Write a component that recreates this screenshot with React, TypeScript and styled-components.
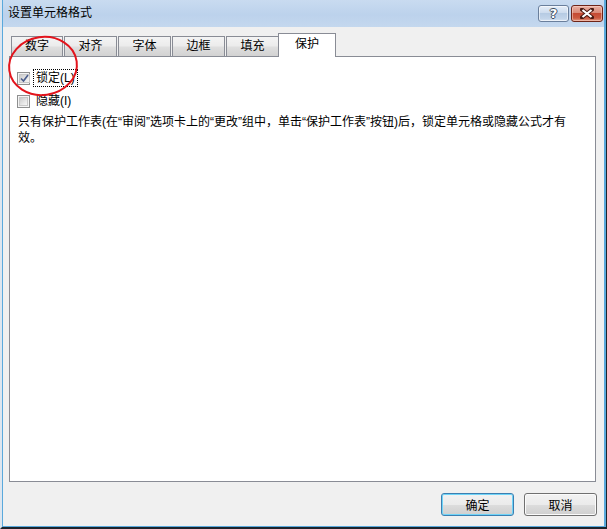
import React from "react";
import styled, { createGlobalStyle } from "styled-components";

const Global = createGlobalStyle`
  html, body { margin: 0; padding: 0; background: #fff; }
  body {
    font-family: "Liberation Sans", "Noto Sans CJK SC", sans-serif;
    font-size: 12px;
    color: #000;
  }
  * { box-sizing: border-box; }
`;

const Frame = styled.div`
  position: relative;
  width: 607px;
  height: 529px;
  display: flex;
  flex-direction: column;
  border-left: 2px solid #dde6f0;
  border-right: 1px solid #1c242c;
  border-bottom: 2px solid #1c242c;
`;

const Inner = styled.div`
  flex: 1;
  display: flex;
  flex-direction: column;
  background: #f0f0f0;
  border-left: 1px solid #5aa9dc;
  border-right: 2px solid #5aa9dc;
  border-bottom: 1px solid #5aa9dc;
`;

const TitleBar = styled.div`
  height: 27px;
  flex: none;
  display: flex;
  align-items: flex-start;
  background: linear-gradient(#c9dbf0 0%, #bcd2ec 55%, #c4d8ee 100%);
  padding: 0 1px 0 5px;
`;

const TitleText = styled.div`
  line-height: 27px;
  font-size: 12px;
  color: #000;
`;

const CaptionButtons = styled.div`
  margin-left: auto;
  padding-top: 5px;
  display: flex;
  gap: 2px;
`;

const HelpButton = styled.div`
  width: 31px;
  height: 17px;
  border: 1px solid #6a7f9c;
  border-radius: 3px;
  background: linear-gradient(#e6eef8 0%, #cddcee 45%, #b6cbe3 50%, #c3d5ea 85%, #d8e4f2 100%);
  box-shadow: inset 0 0 0 1px rgba(255, 255, 255, 0.55);
  display: flex;
  align-items: center;
  justify-content: center;
  font-family: "DejaVu Sans", sans-serif;
  font-weight: bold;
  font-size: 13px;
  line-height: 15px;
  color: #fff;
  text-shadow: -1px 0 #3c4b60, 1px 0 #3c4b60, 0 -1px #3c4b60, 0 1px #3c4b60;
`;

const CloseButton = styled.div`
  width: 32px;
  height: 17px;
  border: 1px solid #6e2418;
  border-radius: 3px;
  background: linear-gradient(#eab0a2 0%, #d98a78 45%, #c54a33 50%, #cc5a40 80%, #e29a83 100%);
  box-shadow: inset 0 0 0 1px rgba(255, 220, 210, 0.5);
  display: flex;
  align-items: center;
  justify-content: center;
`;

const Body = styled.div`
  flex: 1;
  display: flex;
  flex-direction: column;
  padding: 6px 8px 10px 6px;
`;

const TabStrip = styled.div`
  position: relative;
  z-index: 1;
  height: 23px;
  flex: none;
  display: flex;
  align-items: flex-end;
  padding-left: 2px;
`;

const Tab = styled.div<{ $w: number }>`
  width: ${(p) => p.$w}px;
  height: 20px;
  margin-right: 1px;
  border: 1px solid #898c95;
  border-bottom: none;
  background: linear-gradient(#f4f4f4 0%, #ececec 45%, #dedede 55%, #d2d2d2 100%);
  text-align: center;
  line-height: 19px;
  font-size: 12px;
`;

const ActiveTab = styled.div`
  width: 58px;
  height: 24px;
  margin-left: -2px;
  margin-bottom: -1px;
  border: 1px solid #898c95;
  border-bottom: none;
  background: #fff;
  text-align: center;
  line-height: 21px;
  font-size: 12px;
`;

const Panel = styled.div`
  flex: 1;
  background: #fff;
  border: 1px solid #898c95;
  padding: 11px 8px 0 7px;
`;

const CheckRow = styled.div`
  height: 20px;
  display: flex;
  align-items: center;
  margin-bottom: 3px;
`;

const Box = styled.div`
  width: 13px;
  height: 13px;
  border: 1px solid #8e8f8f;
  background: #f4f4f4;
  padding: 1px;
  display: flex;
`;

const BoxInner = styled.div`
  flex: 1;
  border: 1px solid #c8c8c8;
  background: linear-gradient(135deg, #cbcbcb 0%, #e6e6e6 60%, #f6f6f6 100%);
  display: flex;
  align-items: center;
  justify-content: center;
`;

const Label = styled.span<{ $focus?: boolean }>`
  margin-left: 3px;
  padding: 0 2px;
  height: 18px;
  line-height: 16px;
  border: 1px ${(p) => (p.$focus ? "dotted #000" : "solid transparent")};
`;

const Note = styled.p`
  margin: 1px 0 0 1px;
  max-width: 560px;
  line-height: 16px;
`;

const Footer = styled.div`
  flex: none;
  display: flex;
  justify-content: flex-end;
  gap: 10px;
  margin-top: 11px;
  margin-right: -1px;
`;

const Button = styled.button<{ $default?: boolean }>`
  width: 73px;
  height: 23px;
  padding: 0;
  font-family: inherit;
  font-size: 12px;
  color: #000;
  border-radius: 3px;
  border: 1px solid ${(p) => (p.$default ? "#3c7fb1" : "#707070")};
  background: linear-gradient(#f2f2f2 0%, #ebebeb 50%, #dddddd 51%, #cfcfcf 100%);
  box-shadow: inset 0 0 0 1px ${(p) => (p.$default ? "#6fd4f8" : "#fbfbfb")};
`;

const Marker = styled.svg`
  position: absolute;
  z-index: 5;
  left: 0;
  top: 0;
  pointer-events: none;
`;

const Checkbox = ({ checked }: { checked?: boolean }) => (
  <Box>
    <BoxInner>
      {checked && (
        <svg width="9" height="9" viewBox="0 0 9 9">
          <path d="M1 4.5 L3.5 7 L8 1" fill="none" stroke="#4a5d8c" strokeWidth="1.6" />
        </svg>
      )}
    </BoxInner>
  </Box>
);

export default function App() {
  const tabs: [string, number][] = [
    ["数字", 52],
    ["对齐", 53],
    ["字体", 53],
    ["边框", 53],
    ["填充", 53],
  ];
  return (
    <>
      <Global />
      <Frame>
        <Inner>
          <TitleBar>
            <TitleText>设置单元格格式</TitleText>
            <CaptionButtons>
              <HelpButton>?</HelpButton>
              <CloseButton>
                <svg width="14" height="11" viewBox="0 0 14 11">
                  <path d="M2 1.5 L12 9.5 M12 1.5 L2 9.5" stroke="#4b1a12" strokeWidth="4" strokeLinecap="square" />
                  <path d="M2.5 2 L11.5 9 M11.5 2 L2.5 9" stroke="#fff" strokeWidth="2.2" />
                </svg>
              </CloseButton>
            </CaptionButtons>
          </TitleBar>
          <Body>
            <TabStrip>
              {tabs.map(([t, w]) => (
                <Tab key={t} $w={w}>
                  {t}
                </Tab>
              ))}
              <ActiveTab>保护</ActiveTab>
            </TabStrip>
            <Panel>
              <CheckRow>
                <Checkbox checked />
                <Label $focus>锁定(L)</Label>
              </CheckRow>
              <CheckRow>
                <Checkbox />
                <Label>隐藏(I)</Label>
              </CheckRow>
              <Note>
                只有保护工作表(在“审阅”选项卡上的“更改”组中，单击“保护工作表”按钮)后，锁定单元格或隐藏公式才有效。
              </Note>
            </Panel>
            <Footer>
              <Button $default>确定</Button>
              <Button>取消</Button>
            </Footer>
          </Body>
        </Inner>
        <Marker width="100" height="110" viewBox="0 0 100 110">
          <ellipse cx="41" cy="66" rx="34" ry="29" transform="rotate(-8 41 66)" fill="none" stroke="#e3141c" strokeWidth="2" />
        </Marker>
      </Frame>
    </>
  );
}
